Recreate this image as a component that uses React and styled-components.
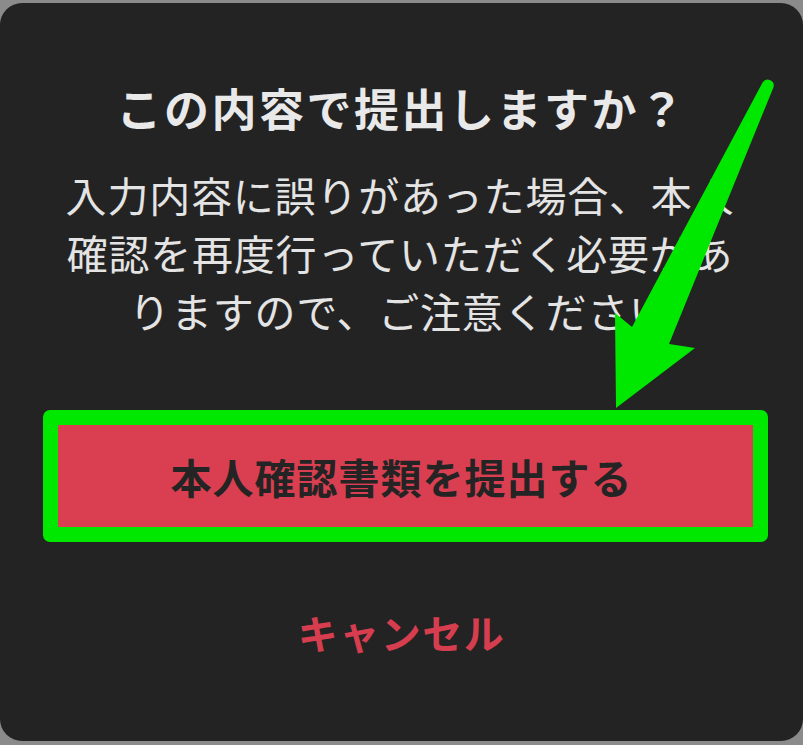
import React from "react";
import styled, { createGlobalStyle } from "styled-components";

const Global = createGlobalStyle`
  html, body { margin: 0; padding: 0; background: #8b8b8b; }
  body { font-family: "Noto Sans CJK JP", "Noto Sans", sans-serif; }
`;

const Stage = styled.div`
  position: relative;
  width: 803px;
  height: 745px;
  overflow: hidden;
  background: #8b8b8b;
  padding-top: 3px;
  box-sizing: border-box;
`;

const Dialog = styled.div`
  width: 803px;
  height: 738px;
  border-radius: 22px;
  background: #232323;
  display: flex;
  flex-direction: column;
  align-items: center;
  padding-top: 77px;
  box-sizing: border-box;
`;

const Title = styled.h1`
  margin: 0;
  font-size: 45px;
  line-height: 56px;
  font-weight: 700;
  letter-spacing: 2.5px;
  color: #e9e9e9;
  text-align: center;
`;

const Message = styled.p`
  margin: 29px 0 0 -3px;
  font-size: 41px;
  line-height: 58px;
  font-weight: 400;
  letter-spacing: 0.8px;
  color: #e4e4e4;
  text-align: center;
`;

const Highlight = styled.div`
  align-self: stretch;
  margin: 71px 35px 0 43px;
  padding: 15px;
  background: #00e800;
  border-radius: 7px;
`;

const SubmitButton = styled.button`
  display: flex;
  align-items: center;
  justify-content: center;
  width: 100%;
  height: 102px;
  border: none;
  border-radius: 0;
  background: #d93f50;
  color: #242424;
  font-family: "Noto Sans CJK JP", "Noto Sans", sans-serif;
  font-size: 41px;
  font-weight: 700;
  letter-spacing: 1px;
  padding: 0 8px 0 0;
`;

const CancelButton = styled.button`
  margin-top: 61px;
  border: none;
  background: none;
  padding: 0;
  color: #d63e4f;
  font-family: "Noto Sans CJK JP", "Noto Sans", sans-serif;
  font-size: 40px;
  line-height: 58px;
  font-weight: 700;
  letter-spacing: 1.5px;
`;

const ArrowLayer = styled.svg`
  position: absolute;
  left: 0;
  top: 0;
  pointer-events: none;
`;

function Arrow() {
  return (
    <ArrowLayer width="803" height="745" viewBox="0 0 803 745">
      <path
        d="M 762.7 82.3 L 632 327 L 615 313 L 616 408 L 695 348 L 669 344 L 773.3 87.7 A 6 6 0 0 0 762.7 82.3 Z"
        fill="#00e800"
      />
    </ArrowLayer>
  );
}

export default function App() {
  return (
    <>
      <Global />
      <Stage>
        <Dialog>
          <Title>この内容で提出しますか？</Title>
          <Message>
            入力内容に誤りがあった場合、本人
            <br />
            確認を再度行っていただく必要があ
            <br />
            りますので、ご注意ください
          </Message>
          <Highlight>
            <SubmitButton>本人確認書類を提出する</SubmitButton>
          </Highlight>
          <CancelButton>キャンセル</CancelButton>
        </Dialog>
        <Arrow />
      </Stage>
    </>
  );
}
